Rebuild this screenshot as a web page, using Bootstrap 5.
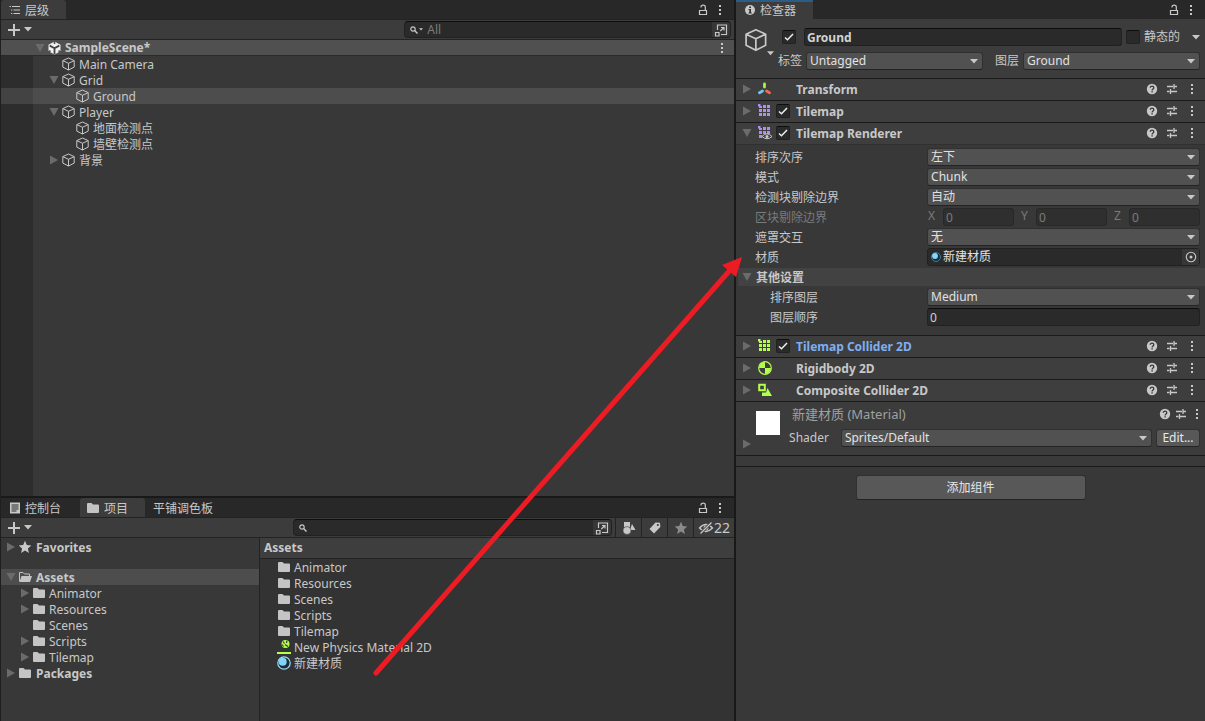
<!DOCTYPE html>
<html lang="zh-CN">
<head>
<meta charset="utf-8">
<meta name="viewport" content="width=device-width, initial-scale=1">
<title>SampleScene</title>
<link href="https://cdn.jsdelivr.net/npm/bootstrap@5.3.0/dist/css/bootstrap.min.css" rel="stylesheet">
<script src="https://cdn.jsdelivr.net/npm/bootstrap@5.3.0/dist/js/bootstrap.bundle.min.js" defer></script>
<style>
:root{--line:#1f1f1f;--bar:#3c3c3c;--panel:#383838;--dark:#282828;--field:#2a2a2a;--ink:#c8c8c8;--hi:#4d4d4d}
body{background:var(--panel);color:var(--ink);font:12px/16px "Noto Sans","Noto Sans CJK SC",sans-serif;overflow:hidden}
svg{display:block;flex:none}
.editor{display:grid;grid-template-columns:minmax(0,61fr) minmax(0,39fr);min-height:100vh}
.left-side{border-left:1px solid var(--line);border-right:1px solid #191919}
.inspector{border-left:1px solid #191919}
.tabs{background:var(--dark);height:19px}
.tab-item{border:0;background:transparent;color:var(--ink);padding:2px 17px 0 8px;gap:4px;font-size:12px;line-height:18px}
.tab-item svg{margin-bottom:2px}
.tab-item.on{background:var(--bar);border-radius:3px 3px 0 0}
.tab-item.cons{padding-right:19px}
.tab-item.proj{padding-left:6px}
.inspector .tab-item.on{border-top:2px solid #2c5d87;line-height:16px;padding-top:1px;border-radius:0}
.tab-tools{gap:10px;padding-right:12px}
.tools{background:var(--bar);height:21px;border-top:1px solid #232323;border-bottom:1px solid #232323;padding-left:7px}
.ghost{border:0;background:transparent;color:var(--ink);padding:0;display:flex;align-items:center;justify-content:center}
.search{background:var(--field);border:1px solid #212121;border-top-color:#0d0d0d;border-radius:4px;height:17px;overflow:hidden;margin-right:3px}
.search input{border:0;background:transparent;color:var(--ink);outline:0;padding:0;line-height:14px;height:14px;min-width:0}
.search input::placeholder{color:#7b7b7b;opacity:1}
.search .pick{background:#373737;width:18px;height:15px}
.tree-row{height:16px;display:flex;align-items:center;white-space:nowrap;padding-top:2px}
.tree-row svg{margin-bottom:2px}
.tg{width:14px;height:14px;color:#6b6b6b}
.ic{width:14px;height:14px;margin-right:4px}
.hierarchy .tree{background:linear-gradient(90deg,#2d2d2d 32px,transparent 32px)}
.hierarchy .tree-row{padding-left:46px}
.hierarchy .tree-row.lv2{padding-left:60px}
.scene{height:16px;background:#505050;border-bottom:1px solid #2a2a2a;padding-left:32px;padding-right:10px}
.tree-row.sel{background:linear-gradient(90deg,#434343 32px,var(--hi) 32px)}
.project{min-height:225px;border-top:2px solid #191919}
.side{width:259px;border-right:1px solid #232323;padding-top:1px}
.side .tree-row{padding-left:3px}
.side .tree-row.lv1{padding-left:17px}
.side .lv1 .ic{margin-right:3px}
.side .tree-row.sel{background:var(--hi);margin-top:14px}
.assets{background:#333}
.crumb{background:#3e3e3e;height:21px;border-bottom:1px solid #232323;padding:2px 4px}
.assets .tree-row{padding-left:17px}
.assets .ic{margin-right:3px}
.cellbtn{width:26px;border-left:1px solid #232323;height:19px}
.cellbtn.wide{width:41px;font-size:14px}
.obj-head{background:var(--bar);height:59px;padding:9px 5px 0 6px}
.obj-head .face{width:32px}
.obj-row{gap:4px;height:18px;margin-bottom:6px}
.comp{background:#3e3e3e;border-top:1px solid #1a1a1a;height:22px;padding:0 3px 1px 4px}
.comp h2{font-size:12px;line-height:16px;font-weight:700;margin:0;padding-top:2px}
.comp h2.added{color:#7faef0}
.comp .slot{width:20px;display:flex}
.comp .end{width:20px}
.mat .end{width:16px}
.tick{appearance:none;width:14px;height:14px;margin:0;background:var(--field) center/12px no-repeat;border:1px solid #212121;border-top-color:#0d0d0d;border-radius:2px;flex:none}
.tick:checked{background-image:url("data:image/svg+xml,%3Csvg xmlns='http://www.w3.org/2000/svg' viewBox='0 0 12 12'%3E%3Cpath d='M2 6.500l2.500 2.300L10 3' fill='none' stroke='%23eee' stroke-width='1.500'/%3E%3C/svg%3E")}
.form-select.drop{appearance:none;height:18px;min-height:0;padding:0 16px 0 3px;font-size:12px;line-height:16px;color:#e2e2e2;border:1px solid #303030;border-bottom-color:#242424;border-radius:3px;background:#515151 url("data:image/svg+xml,%3Csvg xmlns='http://www.w3.org/2000/svg' viewBox='0 0 8 5'%3E%3Cpath d='M0 0h8L4 4.500z' fill='%23c8c8c8'/%3E%3C/svg%3E") right 4px center/8px 5px no-repeat}
.box{background:var(--field);border:1px solid #212121;border-top-color:#0d0d0d;border-radius:3px;height:18px;padding:0 2px;color:#d2d2d2;line-height:16px;min-width:0}
.box:disabled{background:#2f2f2f;border-color:#282828;color:#7b7b7b}
.fields{padding:2px 5px 8px 19px;border-top:1px solid #303030}
.field{display:flex;align-items:center;height:20px}
.field>label,.field>.cap{flex:0 0 172px;padding-top:2px}
.field .ctl{flex:1 1 0;min-width:0}
.xyz{gap:6px}
.xyz label{width:16px;flex:none;padding-left:1px}
.off{color:#7b7b7b}
.sub{background:#424242;height:18px;margin:1px -5px 1px -17px;display:flex;align-items:center;gap:2px;padding:2px 0 0 2px}
.sub svg{margin-bottom:2px}
.inner>label{padding-left:15px}
.objbox{background:var(--field);border:1px solid #212121;border-radius:3px;height:18px;gap:2px;padding-left:3px}
.objbox input{border:0;background:transparent;color:#e2e2e2;padding:0;outline:0;height:16px;min-width:0}
.objbox .pick{background:#373737;width:17px;height:16px}
.mat{background:#3c3c3c;border-top:1px solid #1a1a1a;height:54px;padding:4px 0 0 4px}
.mat-title{color:#a0a0a0;font-size:13px;padding-left:3px}
.swatch{width:24px;height:24px;background:#fff;margin:5px 9px 0 2px}
.mat-row{margin-top:7px;padding-right:5px}
.btnish{background:#585858;border:1px solid #303030;border-bottom-color:#242424;border-radius:3px;color:#e8e8e8;padding:0 4px}
.edit{min-width:44px;height:18px}
.add{width:230px;height:25px}
.gapbar{height:12px;border-top:1px solid #1a1a1a;border-bottom:1px solid #1a1a1a;background:#3a3a3a}
.arrow{position:absolute;left:365px;top:250px;pointer-events:none}
</style>
</head>
<body>
<svg width="0" height="0" class="position-absolute" aria-hidden="true">
<symbol id="down" viewBox="0 0 14 14"><path d="M2.500 3h9L7 11z" fill="currentColor"/></symbol>
<symbol id="right" viewBox="0 0 14 14"><path d="M3 2.500v9L11 7z" fill="currentColor"/></symbol>
<symbol id="caret" viewBox="0 0 8 5"><path d="M0 0h8L4 4.500z" fill="currentColor"/></symbol>
<symbol id="plus" viewBox="0 0 12 12"><path d="M6 0v12M0 6h12" stroke="currentColor" stroke-width="2"/></symbol>
<symbol id="cube" viewBox="0 0 14 14"><path d="M7.500 1L13.200 3.600v6.500L7.500 13 1.800 10.100V3.600zM1.800 3.600l5.700 2.700 5.700-2.700M7.500 6.300V13" fill="none" stroke="currentColor" stroke-linejoin="round"/></symbol>
<symbol id="unity" viewBox="0 0 14 14"><path d="M7.500 .5L13.500 3.700V10.300L7.500 13.500 1.500 10.300V3.700z" fill="#f0f0f0"/><path d="M7.500 7.200V13M7.500 7.200L2.700 4.600M7.500 7.200l4.800-2.600" stroke="#444" stroke-width="1.800"/><path d="M7.500 0v3M1 11.200l2.500-1.500M14 11.200l-2.500-1.500" stroke="#505050" stroke-width="1.600"/></symbol>
<symbol id="lock" viewBox="0 0 10 12"><path d="M1.500 6.500h7v4h-7zM3 3.500V3c0-2.600 4.300-2.600 4.300 0v3.500" fill="none" stroke="currentColor" stroke-width="1.200"/></symbol>
<symbol id="dots" viewBox="0 0 4 12"><path d="M1 1h2v2H1zM1 5h2v2H1zM1 9h2v2H1z" fill="currentColor"/></symbol>
<symbol id="list" viewBox="0 0 12 10"><path d="M3 1.500h8M4.500 5h6.500M4.500 8.500h6.500M.5 1.500H2M2 5h1.300M2 8.500h1.300" stroke="currentColor" stroke-width="1.200"/></symbol>
<symbol id="lens" viewBox="0 0 10 10"><circle cx="4" cy="4" r="2.200" fill="none" stroke="currentColor" stroke-width="1.200"/><path d="M5.600 5.600L8.500 8.500" stroke="currentColor" stroke-width="1.400"/></symbol>
<symbol id="expand" viewBox="0 0 14 14"><path d="M3.500 7V2h9v9.500H7M1.500 9.500h3.500v3.500H1.500zM6.300 8l3.500-3.500M7 4.500h3v3" fill="none" stroke="currentColor" stroke-width="1.200"/></symbol>
<symbol id="folder" viewBox="0 0 14 14"><path d="M1 3q0-1 1-1h3.500l1.500 1.500h5q1 0 1 1V11q0 1-1 1H2q-1 0-1-1z" fill="#c4c4c4"/></symbol>
<symbol id="fopen" viewBox="0 0 14 14"><path d="M1.500 11.500V2.500H5l1.500 1.500h5v2" fill="none" stroke="#c4c4c4"/><path d="M3.500 6H14l-2 6H1.500z" fill="#c4c4c4"/></symbol>
<symbol id="star" viewBox="0 0 14 14"><path d="M7 .8l1.800 4.200 4.500.4-3.400 3 1 4.600L7 10.500 3.100 13l1-4.600L.7 5.400 5.200 5z" fill="currentColor"/></symbol>
<symbol id="console" viewBox="0 0 12 12"><path d="M1 .5h10v11H1z" fill="#c8c8c8"/><path d="M2.500 3h7M2.500 5h7M2.500 7h7M2.500 9h5" stroke="#282828"/></symbol>
<symbol id="info" viewBox="0 0 12 12"><circle cx="6" cy="6" r="5" fill="#c8c8c8"/><path d="M5.200 2.500h1.800v1.600H5.200zM4.500 5h2.500v3.500h.8v1H4.500v-1h.8V6h-.8z" fill="#333"/></symbol>
<symbol id="help" viewBox="0 0 12 12"><circle cx="6" cy="6" r="5.200" fill="#c8c8c8"/><path d="M4.300 4.700c0-2.200 3.500-2.100 3.500 0C7.800 6 6.100 5.900 6.100 7.400" fill="none" stroke="#383838" stroke-width="1.300"/><path d="M5.400 8.300h1.400v1.300H5.400z" fill="#383838"/></symbol>
<symbol id="slide" viewBox="0 0 12 12"><path d="M1 3.500h6M8 1v5M8 3.500h3M1 8.500h2.500M4.500 6v5M5 8.500h6" stroke="currentColor" stroke-width="1.300"/></symbol>
<symbol id="axes" viewBox="0 0 14 14"><g stroke-width="2.800" stroke-linecap="round"><path d="M6.500 2v3" stroke="#a2f54c"/><path d="M4.500 9l-3 1.700" stroke="#6cc8f5"/><path d="M8.500 9l3 1.700" stroke="#f5694a"/></g></symbol>
<symbol id="grid9" viewBox="0 0 14 14"><path d="M1 2h3v2H1zM5 1h3v3H5zM9 1h3v3H9zM1 5h3v3H1zM5 5h3v3H5zM9 5h3v3H9zM1 9h3v3H1zM5 9h3v3H5zM9 9h3v3H9zM0 0h2.500v2.500H0z" fill="currentColor"/></symbol>
<symbol id="gridEye" viewBox="0 0 14 14"><path d="M1 2h3v2H1zM5 1h3v3H5zM9 1h3v3H9zM1 5h3v3H1zM5 5h3v3H5zM9 5h3v3H9zM1 9h3v3H1zM0 0h2.500v2.500H0z" fill="#b18cf5"/><path d="M4 10.500Q9 5 14 10.500 9 15 4 10.500z" fill="#3e3e3e" stroke="#c8c8c8"/><circle cx="9" cy="10.500" r="1.500" fill="#c8c8c8"/></symbol>
<symbol id="rigid" viewBox="0 0 14 14"><circle cx="7" cy="7" r="6.300" fill="#3e3e3e" stroke="#b4ff4b" stroke-width="1.200"/><path d="M7 7V1A6 6 0 0 0 1 7zM7 7v6A6 6 0 0 0 13 7z" fill="#b4ff4b"/></symbol>
<symbol id="composite" viewBox="0 0 14 14"><path d="M1.200 1.700h5.600v5.600H1.200z" fill="none" stroke="#b4ff4b" stroke-width="2"/><path d="M9.500 5L14 13H4v-3.500h4z" fill="#b4ff4b"/></symbol>
<symbol id="ball" viewBox="0 0 14 14"><circle cx="7" cy="7" r="6.200" fill="#1f2c33" stroke="#9bdcf8" stroke-width="1.200"/><circle cx="5.700" cy="5.700" r="4" fill="#80d4fa"/></symbol>
<symbol id="ballDark" viewBox="0 0 10 10"><circle cx="5" cy="5" r="4.500" fill="#16303c" stroke="#3d7d9c"/><circle cx="4" cy="4" r="2.900" fill="#8ad6f8"/></symbol>
<symbol id="phys" viewBox="0 0 14 14"><circle cx="8.500" cy="4" r="4" fill="#b4ff4b"/><path d="M6 1.500l1.500 2M8 4.500l3 2M10 .5L9.500 3M5 4.500l1.500 2" stroke="#333" stroke-width="1.200"/><path d="M0 12h14v2H0z" fill="#b4ff4b"/></symbol>
<symbol id="shapes" viewBox="0 0 14 14"><path d="M2 1h6v5H2zM10 3l3.500 6H8z" fill="#c8c8c8"/><circle cx="5" cy="9.500" r="4" fill="#c8c8c8" stroke="#3c3c3c" stroke-width=".6"/></symbol>
<symbol id="tag" viewBox="0 0 14 14"><path d="M7.500 1.500l4.500.3.300 4.200-6.300 6.500-4.500-4.500z" fill="#c8c8c8"/><circle cx="9.800" cy="4" r="1" fill="#333"/></symbol>
<symbol id="hide" viewBox="0 0 16 14"><path d="M1.500 7Q8 0 14.500 7 8 14 1.500 7z" fill="none" stroke="#c8c8c8" stroke-width="1.300"/><circle cx="8" cy="7" r="2.500" fill="#c8c8c8"/><path d="M2.500 12.500L13.500 1.500" stroke="#3c3c3c" stroke-width="3"/><path d="M2.500 12.500L13.500 1.500" stroke="#c8c8c8" stroke-width="1.300"/></symbol>
<symbol id="target" viewBox="0 0 12 12"><circle cx="6" cy="6" r="4.700" fill="none" stroke="#c8c8c8" stroke-width="1.100"/><circle cx="6" cy="6" r="1.500" fill="#c8c8c8"/></symbol>
</svg>

<main class="editor">
<div class="left-side d-flex flex-column">
 <section class="hierarchy flex-grow-1 d-flex flex-column">
  <div class="tabs d-flex">
   <button class="tab-item on d-flex align-items-center"><svg width="12" height="10"><use href="#list"/></svg>层级</button>
   <div class="tab-tools ms-auto d-flex align-items-center"><button class="ghost" aria-label="lock"><svg width="10" height="12"><use href="#lock"/></svg></button><button class="ghost" aria-label="menu"><svg width="4" height="12"><use href="#dots"/></svg></button></div>
  </div>
  <div class="tools d-flex align-items-center">
   <button class="ghost gap-1 me-auto" aria-label="add"><svg width="12" height="12"><use href="#plus"/></svg><svg width="8" height="5"><use href="#caret"/></svg></button>
   <div class="search d-flex align-items-center ps-1" style="width:45%"><svg width="10" height="10"><use href="#lens"/></svg><svg width="4" height="3" class="me-1"><use href="#caret"/></svg><input class="flex-grow-1" placeholder="All" aria-label="search hierarchy"><button class="ghost pick" aria-label="open search"><svg width="14" height="14"><use href="#expand"/></svg></button></div>
  </div>
  <div class="scene d-flex align-items-center fw-bold"><svg class="tg"><use href="#down"/></svg><svg class="ic"><use href="#unity"/></svg>SampleScene*<button class="ghost ms-auto" aria-label="scene menu"><svg width="4" height="12"><use href="#dots"/></svg></button></div>
  <div class="tree flex-grow-1">
   <div class="tree-row"><span class="tg"></span><svg class="ic"><use href="#cube"/></svg>Main Camera</div>
   <div class="tree-row"><svg class="tg"><use href="#down"/></svg><svg class="ic"><use href="#cube"/></svg>Grid</div>
   <div class="tree-row sel lv2"><span class="tg"></span><svg class="ic"><use href="#cube"/></svg>Ground</div>
   <div class="tree-row"><svg class="tg"><use href="#down"/></svg><svg class="ic"><use href="#cube"/></svg>Player</div>
   <div class="tree-row lv2"><span class="tg"></span><svg class="ic"><use href="#cube"/></svg>地面检测点</div>
   <div class="tree-row lv2"><span class="tg"></span><svg class="ic"><use href="#cube"/></svg>墙壁检测点</div>
   <div class="tree-row"><svg class="tg"><use href="#right"/></svg><svg class="ic"><use href="#cube"/></svg>背景</div>
  </div>
 </section>
 <section class="project d-flex flex-column">
  <div class="tabs d-flex">
   <button class="tab-item cons d-flex align-items-center"><svg width="12" height="12"><use href="#console"/></svg>控制台</button>
   <button class="tab-item on proj d-flex align-items-center"><svg width="14" height="14"><use href="#folder"/></svg>项目</button>
   <button class="tab-item">平铺调色板</button>
   <div class="tab-tools ms-auto d-flex align-items-center"><button class="ghost" aria-label="lock"><svg width="10" height="12"><use href="#lock"/></svg></button><button class="ghost" aria-label="menu"><svg width="4" height="12"><use href="#dots"/></svg></button></div>
  </div>
  <div class="tools d-flex align-items-center">
   <button class="ghost gap-1 me-auto" aria-label="add"><svg width="12" height="12"><use href="#plus"/></svg><svg width="8" height="5"><use href="#caret"/></svg></button>
   <div class="search d-flex align-items-center ps-1" style="width:44%"><svg width="10" height="10"><use href="#lens"/></svg><input class="flex-grow-1" aria-label="search project"><button class="ghost pick" aria-label="open search"><svg width="14" height="14"><use href="#expand"/></svg></button></div>
   <button class="ghost cellbtn" aria-label="filter by type"><svg width="14" height="14"><use href="#shapes"/></svg></button>
   <button class="ghost cellbtn" aria-label="filter by label"><svg width="14" height="14"><use href="#tag"/></svg></button>
   <button class="ghost cellbtn" aria-label="save search"><svg width="14" height="14" color="#8a8a8a"><use href="#star"/></svg></button>
   <button class="ghost cellbtn wide"><svg width="16" height="14"><use href="#hide"/></svg>22</button>
  </div>
  <div class="d-flex flex-grow-1">
   <div class="side">
    <div class="tree-row fw-bold"><svg class="tg"><use href="#right"/></svg><svg class="ic"><use href="#star"/></svg>Favorites</div>
    <div class="tree-row fw-bold sel"><svg class="tg"><use href="#down"/></svg><svg class="ic"><use href="#fopen"/></svg>Assets</div>
    <div class="tree-row lv1"><svg class="tg"><use href="#right"/></svg><svg class="ic"><use href="#folder"/></svg>Animator</div>
    <div class="tree-row lv1"><svg class="tg"><use href="#right"/></svg><svg class="ic"><use href="#folder"/></svg>Resources</div>
    <div class="tree-row lv1"><span class="tg"></span><svg class="ic"><use href="#folder"/></svg>Scenes</div>
    <div class="tree-row lv1"><svg class="tg"><use href="#right"/></svg><svg class="ic"><use href="#folder"/></svg>Scripts</div>
    <div class="tree-row lv1"><svg class="tg"><use href="#right"/></svg><svg class="ic"><use href="#folder"/></svg>Tilemap</div>
    <div class="tree-row fw-bold"><svg class="tg"><use href="#right"/></svg><svg class="ic"><use href="#folder"/></svg>Packages</div>
   </div>
   <div class="assets flex-grow-1">
    <div class="crumb fw-bold">Assets</div>
    <div class="tree-row"><svg class="ic"><use href="#folder"/></svg>Animator</div>
    <div class="tree-row"><svg class="ic"><use href="#folder"/></svg>Resources</div>
    <div class="tree-row"><svg class="ic"><use href="#folder"/></svg>Scenes</div>
    <div class="tree-row"><svg class="ic"><use href="#folder"/></svg>Scripts</div>
    <div class="tree-row"><svg class="ic"><use href="#folder"/></svg>Tilemap</div>
    <div class="tree-row"><svg class="ic"><use href="#phys"/></svg>New Physics Material 2D</div>
    <div class="tree-row"><svg class="ic"><use href="#ball"/></svg>新建材质</div>
   </div>
  </div>
 </section>
</div>

<section class="inspector">
 <div class="tabs d-flex">
  <button class="tab-item on d-flex align-items-center"><svg width="12" height="12"><use href="#info"/></svg>检查器</button>
  <div class="tab-tools ms-auto d-flex align-items-center"><button class="ghost" aria-label="lock"><svg width="10" height="12"><use href="#lock"/></svg></button><button class="ghost" aria-label="menu"><svg width="4" height="12"><use href="#dots"/></svg></button></div>
 </div>
 <div class="obj-head d-flex">
  <button class="ghost face align-items-start me-1" aria-label="icon"><svg width="24" height="24"><use href="#cube"/></svg><svg width="7" height="5" class="align-self-center"><use href="#caret"/></svg></button>
  <div class="flex-grow-1">
   <div class="obj-row d-flex align-items-center">
    <input type="checkbox" class="tick ms-1" checked aria-label="active"><input class="box flex-grow-1 fw-bold ms-1" value="Ground" aria-label="name">
    <input type="checkbox" class="tick" id="st"><label for="st">静态的</label><button class="ghost ms-2" aria-label="static flags"><svg width="8" height="5"><use href="#caret"/></svg></button>
   </div>
   <div class="obj-row d-flex align-items-center">
    <label for="tagsel" class="text-nowrap">标签</label><select id="tagsel" class="form-select drop"><option>Untagged</option></select>
    <label for="laysel" class="ms-2 text-nowrap">图层</label><select id="laysel" class="form-select drop"><option>Ground</option></select>
   </div>
  </div>
 </div>

 <div class="comp d-flex align-items-center"><svg class="tg me-1"><use href="#right"/></svg><svg class="me-1" width="14" height="14"><use href="#axes"/></svg><span class="slot"></span><h2>Transform</h2><button class="ghost end ms-auto" aria-label="help"><svg width="12" height="12"><use href="#help"/></svg></button><button class="ghost end" aria-label="preset"><svg width="12" height="12"><use href="#slide"/></svg></button><button class="ghost end" aria-label="menu"><svg width="4" height="12"><use href="#dots"/></svg></button></div>
 <div class="comp d-flex align-items-center"><svg class="tg me-1"><use href="#right"/></svg><svg class="me-1" width="14" height="14" color="#b18cf5"><use href="#grid9"/></svg><span class="slot"><input type="checkbox" class="tick" checked aria-label="Tilemap"></span><h2>Tilemap</h2><button class="ghost end ms-auto" aria-label="help"><svg width="12" height="12"><use href="#help"/></svg></button><button class="ghost end" aria-label="preset"><svg width="12" height="12"><use href="#slide"/></svg></button><button class="ghost end" aria-label="menu"><svg width="4" height="12"><use href="#dots"/></svg></button></div>
 <div class="comp d-flex align-items-center"><svg class="tg me-1"><use href="#down"/></svg><svg class="me-1" width="14" height="14"><use href="#gridEye"/></svg><span class="slot"><input type="checkbox" class="tick" checked aria-label="Tilemap Renderer"></span><h2>Tilemap Renderer</h2><button class="ghost end ms-auto" aria-label="help"><svg width="12" height="12"><use href="#help"/></svg></button><button class="ghost end" aria-label="preset"><svg width="12" height="12"><use href="#slide"/></svg></button><button class="ghost end" aria-label="menu"><svg width="4" height="12"><use href="#dots"/></svg></button></div>
 <div class="fields">
  <div class="field"><label for="f1">排序次序</label><select id="f1" class="form-select drop ctl"><option>左下</option></select></div>
  <div class="field"><label for="f2">模式</label><select id="f2" class="form-select drop ctl"><option>Chunk</option></select></div>
  <div class="field"><label for="f3">检测块剔除边界</label><select id="f3" class="form-select drop ctl"><option>自动</option></select></div>
  <div class="field off"><span class="cap">区块剔除边界</span><div class="ctl d-flex xyz">
   <div class="d-flex flex-fill"><label for="vx">X</label><input id="vx" class="box w-100" value="0" disabled></div>
   <div class="d-flex flex-fill"><label for="vy">Y</label><input id="vy" class="box w-100" value="0" disabled></div>
   <div class="d-flex flex-fill"><label for="vz">Z</label><input id="vz" class="box w-100" value="0" disabled></div></div></div>
  <div class="field"><label for="f4">遮罩交互</label><select id="f4" class="form-select drop ctl"><option>无</option></select></div>
  <div class="field"><label for="f5">材质</label><div class="objbox ctl d-flex align-items-center"><svg width="10" height="10"><use href="#ballDark"/></svg><input id="f5" class="flex-grow-1" value="新建材质" readonly><button class="ghost pick" aria-label="pick material"><svg width="12" height="12"><use href="#target"/></svg></button></div></div>
  <div class="sub fw-bold"><svg class="tg"><use href="#down"/></svg>其他设置</div>
  <div class="field inner"><label for="f6">排序图层</label><select id="f6" class="form-select drop ctl"><option>Medium</option></select></div>
  <div class="field inner"><label for="f7">图层顺序</label><input id="f7" class="box ctl" value="0"></div>
 </div>
 <div class="comp d-flex align-items-center"><svg class="tg me-1"><use href="#right"/></svg><svg class="me-1" width="14" height="14" color="#b4ff4b"><use href="#grid9"/></svg><span class="slot"><input type="checkbox" class="tick" checked aria-label="Tilemap Collider 2D"></span><h2 class="added">Tilemap Collider 2D</h2><button class="ghost end ms-auto" aria-label="help"><svg width="12" height="12"><use href="#help"/></svg></button><button class="ghost end" aria-label="preset"><svg width="12" height="12"><use href="#slide"/></svg></button><button class="ghost end" aria-label="menu"><svg width="4" height="12"><use href="#dots"/></svg></button></div>
 <div class="comp d-flex align-items-center"><svg class="tg me-1"><use href="#right"/></svg><svg class="me-1" width="14" height="14"><use href="#rigid"/></svg><span class="slot"></span><h2>Rigidbody 2D</h2><button class="ghost end ms-auto" aria-label="help"><svg width="12" height="12"><use href="#help"/></svg></button><button class="ghost end" aria-label="preset"><svg width="12" height="12"><use href="#slide"/></svg></button><button class="ghost end" aria-label="menu"><svg width="4" height="12"><use href="#dots"/></svg></button></div>
 <div class="comp d-flex align-items-center"><svg class="tg me-1"><use href="#right"/></svg><svg class="me-1" width="14" height="14"><use href="#composite"/></svg><span class="slot"></span><h2>Composite Collider 2D</h2><button class="ghost end ms-auto" aria-label="help"><svg width="12" height="12"><use href="#help"/></svg></button><button class="ghost end" aria-label="preset"><svg width="12" height="12"><use href="#slide"/></svg></button><button class="ghost end" aria-label="menu"><svg width="4" height="12"><use href="#dots"/></svg></button></div>
 <div class="mat d-flex">
  <svg class="tg align-self-end mb-1"><use href="#right"/></svg>
  <div class="swatch"></div>
  <div class="flex-grow-1">
   <div class="d-flex align-items-center"><span class="mat-title">新建材质 (Material)</span><button class="ghost end ms-auto" aria-label="help"><svg width="12" height="12"><use href="#help"/></svg></button><button class="ghost end" aria-label="preset"><svg width="12" height="12"><use href="#slide"/></svg></button><button class="ghost end" aria-label="menu"><svg width="4" height="12"><use href="#dots"/></svg></button></div>
   <div class="mat-row d-flex align-items-center"><label for="sh" class="me-2">Shader</label><select id="sh" class="form-select drop mx-1"><option>Sprites/Default</option></select><button class="btnish edit">Edit...</button></div>
  </div>
 </div>
 <div class="gapbar"></div>
 <div class="text-center"><button class="btnish add mt-2">添加组件</button></div>
</section>
</main>
<svg class="arrow" width="380" height="430" aria-hidden="true"><path d="M11 423L366 19" stroke="#ed1c24" stroke-width="5" stroke-linecap="round"/><path d="M377 7L371 27 357 15z" fill="#ed1c24"/></svg>
</body>
</html>
